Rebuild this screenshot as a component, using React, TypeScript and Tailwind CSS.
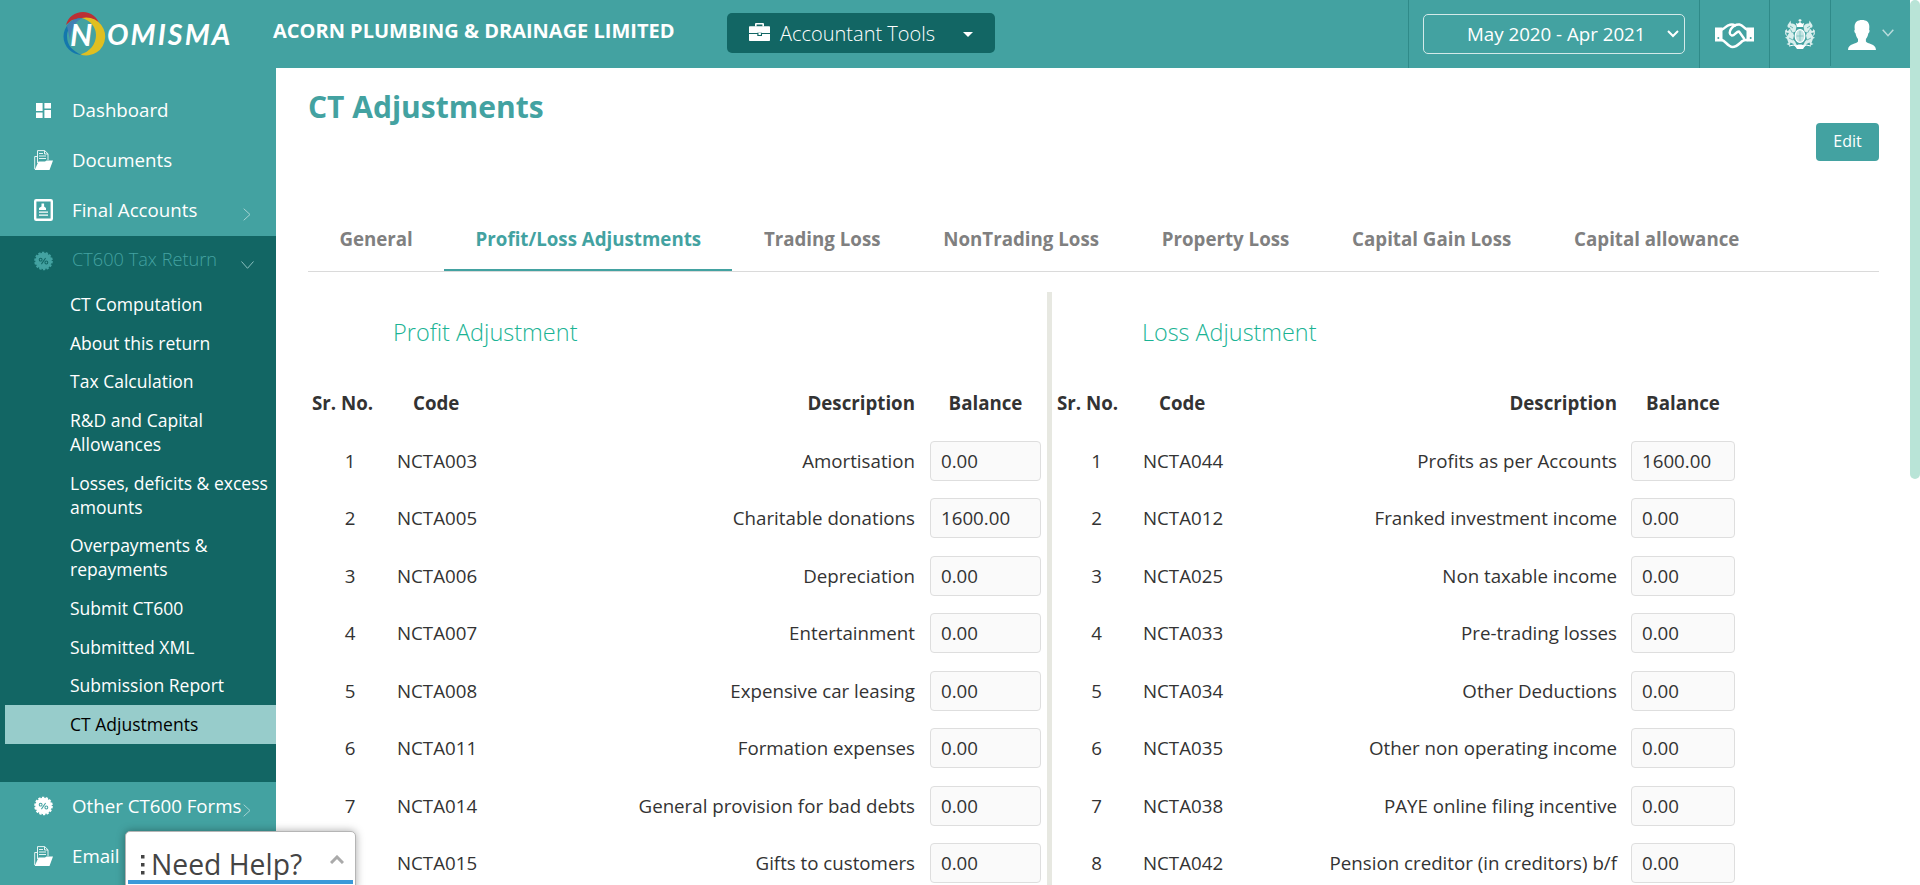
import React from "react";

type Row = [string, string, string];

const profitRows: Row[] = [
  ["NCTA003", "Amortisation", "0.00"],
  ["NCTA005", "Charitable donations", "1600.00"],
  ["NCTA006", "Depreciation", "0.00"],
  ["NCTA007", "Entertainment", "0.00"],
  ["NCTA008", "Expensive car leasing", "0.00"],
  ["NCTA011", "Formation expenses", "0.00"],
  ["NCTA014", "General provision for bad debts", "0.00"],
  ["NCTA015", "Gifts to customers", "0.00"],
];

const lossRows: Row[] = [
  ["NCTA044", "Profits as per Accounts", "1600.00"],
  ["NCTA012", "Franked investment income", "0.00"],
  ["NCTA025", "Non taxable income", "0.00"],
  ["NCTA033", "Pre-trading losses", "0.00"],
  ["NCTA034", "Other Deductions", "0.00"],
  ["NCTA035", "Other non operating income", "0.00"],
  ["NCTA038", "PAYE online filing incentive", "0.00"],
  ["NCTA042", "Pension creditor (in creditors) b/f", "0.00"],
];

const subItems = [
  "CT Computation",
  "About this return",
  "Tax Calculation",
  "R&D and Capital Allowances",
  "Losses, deficits & excess amounts",
  "Overpayments & repayments",
  "Submit CT600",
  "Submitted XML",
  "Submission Report",
  "CT Adjustments",
];

const tabs = [
  "General",
  "Profit/Loss Adjustments",
  "Trading Loss",
  "NonTrading Loss",
  "Property Loss",
  "Capital Gain Loss",
  "Capital allowance",
];

function Logo() {
  return (
    <div className="flex h-[68px] w-[273px] shrink-0 items-start pl-[60px]">
      <div className="relative mt-[11px] h-[45px] w-[47px] shrink-0">
        <svg viewBox="0 0 46 45" className="h-[45px] w-[46px]">
          <path d="M6 14C8 6 15 1 23 1s14 5 17 13L32 9 22 7 12 9Z" fill="#bb3034" />
          <path d="M20 43.500A19 19 0 1 0 22 7c9 3 14 9 14 17 0 9-6 17-16 19.500Z" fill="#e0bf20" />
          <path d="M22 7a18.500 18.500 0 1 0 0 37C12 40 7 34 7 25c0-8 7-15 15-18Z" fill="#1477ad" />
          <path d="M22 7c-6 0-12 3-15 8l3 14C11 18 15 11 22 7Z" fill="#4380b2" />
        </svg>
        <span className="absolute left-[10px] top-[6px] font-[Lato] text-[31px] font-bold italic leading-[34px] text-white">N</span>
      </div>
      <span className="mt-[18px] font-[Lato] text-[28.500px] font-bold italic leading-[32px] tracking-[2.100px] text-white">OMISMA</span>
    </div>
  );
}

function DashboardIcon() {
  return (
    <svg viewBox="0 0 15 15" className="h-[15px] w-[15px]" fill="#fff">
      <path d="M0 0h6.600v8H0zM0 9.500h6.600V15H0zM8.400 0H15v5.500H8.400zM8.400 7H15v8H8.400z" />
    </svg>
  );
}

function FolderIcon() {
  return (
    <svg viewBox="0 0 19 20" className="h-5 w-[19px]" fill="none">
      <path d="M.7 19V6.500H3M3.500 13V.6h7.200L14 3.800V10" stroke="#e6f4f3" strokeWidth="1" />
      <path d="M10.500.6V4H14" stroke="#e6f4f3" strokeWidth="1" />
      <path d="M5 3.500h4M5 6h7M5 8.500h7" stroke="#e6f4f3" strokeWidth="1" />
      <path d="M4.500 11.500H11l1.500-1H19L15.500 20H.7Z" fill="#fff" />
    </svg>
  );
}

function AccountsIcon() {
  return (
    <svg viewBox="0 0 19 22" className="h-[22px] w-[19px]" fill="none">
      <rect x="1.200" y="1.200" width="16.600" height="19.600" rx="1" stroke="#fff" strokeWidth="2.400" />
      <path d="M7.500 4.500h2.600v3L12 9v2H5V9l2.500-1.500zM5 12.500h9v1.300H5zM5 15.500h9v1.300H5z" fill="#fff" />
    </svg>
  );
}

function PercentBadge({ fill, mark }: { fill: string; mark: string }) {
  return (
    <svg viewBox="0 0 20 20" className="h-5 w-[19px]">
      <circle cx="10" cy="10" r="8.700" fill={fill} />
      <circle cx="10" cy="10" r="8.900" fill="none" stroke={fill} strokeWidth="1.800" strokeDasharray="2.500 1.500" />
      <g stroke={mark} strokeWidth="1.100" fill="none">
        <circle cx="7" cy="8.600" r="1.500" />
        <circle cx="13" cy="11.600" r="1.500" />
        <path d="M12.200 6.800 7.800 13.300" />
      </g>
    </svg>
  );
}

function ChevronRight() {
  return (
    <svg viewBox="0 0 8 13" className="h-[13px] w-2" fill="none" stroke="#a5d3d2" strokeWidth="1">
      <path d="M.7.7 7 6.500.7 12.300" />
    </svg>
  );
}

function SideItem({ icon, label, arrow }: { icon: React.ReactNode; label: string; arrow?: boolean }) {
  return (
    <div className="relative flex h-[50px] items-center pl-[34px] text-[18.720px] text-white">
      <span className="flex w-[19px] justify-center">{icon}</span>
      <span className="whitespace-nowrap pl-[19px]">{label}</span>
      {arrow && (
        <span className="absolute left-[243px] top-[23px]">
          <ChevronRight />
        </span>
      )}
    </div>
  );
}

function Handshake() {
  return (
    <svg viewBox="0 0 39 26" className="h-[26px] w-[39px]" fill="none" stroke="#fff" strokeLinejoin="round" strokeLinecap="round">
      <path d="M0 4.500h7.500v14H0zM31.500 4.500H39v14h-7.500z" fill="#fff" stroke="none" />
      <circle cx="3.300" cy="15" r="1" fill="#43a2a1" stroke="none" />
      <circle cx="35.700" cy="15" r="1" fill="#43a2a1" stroke="none" />
      <path d="M7 6.500c3-1 4-4 8-4.800 2-.4 4 0 5 .8" strokeWidth="2.400" />
      <path d="M32 6.500c-3-1-4-4.500-7.500-5-4-.4-6.500 1.600-8.500 4.500-2 3-1.500 6 .8 6.500 2.700.6 4.200-4 7.200-4l5 7" strokeWidth="2.400" />
      <path d="M7 17c3 .5 6 7 10.500 7 4 0 7-3.500 10-6 1.500-1 3-1.200 4.500-1" strokeWidth="2.600" />
    </svg>
  );
}

function Crest() {
  const half = (
    <g>
      <path d="M11.500 7.500C10 5 8.500 4 6 4.500L5.500 1.500 4 4C2.500 5.500 2 7 3 8.500l2.500.5L3 12l-2.500-1L1 13.500l3 .5-2.500 4-1.500.8 2 1 1.500 4.200-2 1 3 1.500 1-3 3 1.500 1.500 2.500 2-1-2-4-2-2 1-4-1-3 2.500-1Z" fill="#d9efed" />
      <path d="M1.500 16.500c-1.200-2-1-4 0-6M4 27l5-1 3 2" stroke="#fff" strokeWidth="1" fill="none" />
      <path d="M5.500 10.500 7.500 14M4 19l4 2M5 7l3 2" stroke="#43a2a1" strokeWidth=".7" />
    </g>
  );
  return (
    <svg viewBox="0 0 30 31" className="h-[31px] w-[30px]">
      {half}
      <g transform="matrix(-1 0 0 1 30 0)">{half}</g>
      <path d="M15 0v3M13.500 1.300h3" stroke="#fff" strokeWidth="1" />
      <path d="M10.800 4l1.200 4h6l1.200-4-2 .8L15 3l-2.200 1.800Z" fill="#fff" />
      <ellipse cx="15" cy="17" rx="4.800" ry="6.500" fill="#c4e5e3" stroke="#fff" strokeWidth="1.200" />
      <path d="M15 12v10M11.500 17h7" stroke="#7cc0be" strokeWidth=".8" />
      <path d="M10 27c2-2 8-2 10 0l-2 3h-6Z" fill="#fff" />
    </svg>
  );
}

function AdjustmentTable({ rows, cols, inputWidth, numClass }: { rows: Row[]; cols: string; inputWidth: string; numClass: string }) {
  return (
    <div>
      <div className={`grid h-[57.500px] items-center pb-[2px] font-bold ${cols}`}>
        <span className="whitespace-nowrap">Sr. No.</span>
        <span className="pl-[16px]">Code</span>
        <span className="whitespace-nowrap text-right">Description</span>
        <span className={`text-center ${inputWidth}`}>Balance</span>
      </div>
      {rows.map(([code, description, balance], i) => (
        <div key={code} className={`grid h-[57.500px] items-center ${cols}`}>
          <span className={`pb-px text-center ${numClass}`}>{i + 1}</span>
          <span className="pb-px">{code}</span>
          <span className="whitespace-nowrap pb-px text-right">{description}</span>
          <input
            readOnly
            value={balance}
            className={`-mt-px h-10 rounded border border-[#dedede] bg-[#fafafa] pb-px pl-[10px] text-[#333] outline-none ${inputWidth}`}
          />
        </div>
      ))}
    </div>
  );
}

export default function App() {
  return (
    <div className="relative flex h-[885px] w-[1920px] overflow-hidden bg-white font-['Open_Sans',sans-serif] text-[18.720px] text-[#333]">
      <div className="flex min-w-0 flex-1 flex-col">
        <header className="flex h-[68px] shrink-0 bg-[#43a2a1] text-white">
          <Logo />
          <span className="mt-[17px] w-[454px] shrink-0 whitespace-nowrap text-[20px] font-bold leading-7">ACORN PLUMBING &amp; DRAINAGE LIMITED</span>
          <button className="mt-[13px] flex h-10 w-[268px] shrink-0 items-center rounded-[5px] bg-[#126664] pl-[22px] text-[20px] font-light">
            <svg viewBox="0 0 21 18" className="mb-[2px] h-[18px] w-[21px]" fill="#fff">
              <path d="M6 3.500V1.200C6 .5 6.500 0 7.200 0h6.600c.7 0 1.200.5 1.200 1.200v2.300h-1.600V1.600H7.600v1.900Z" />
              <path d="M1 3.300h19c.6 0 1 .4 1 1V10h-8v-.3H8.300v.3H0V4.300c0-.6.4-1 1-1ZM0 11h8.300v2H13v-2h8v6c0 .6-.4 1-1 1H1c-.6 0-1-.4-1-1Z" />
              <path d="M9.500 10h2.400v2H9.500z" />
            </svg>
            <span className="w-[183px] whitespace-nowrap pt-[2px] pl-[10px] text-left">Accountant Tools</span>
            <svg viewBox="0 0 10 5" className="mt-[3px] ml-[10px] h-[5px] w-[10px]" fill="#fff">
              <path d="M0 0h10L5 5z" />
            </svg>
          </button>
          <div className="ml-auto flex h-[68px]">
            <div className="w-[291px] border-l border-[#2f8a89] pt-[14px] pl-[14px]">
              <div className="flex h-10 w-[262px] items-center rounded-[5px] border border-[#d4eae9] pl-[43px]">
                <span className="w-[200px] whitespace-nowrap">May 2020 - Apr 2021</span>
                <svg viewBox="0 0 12 8" className="h-2 w-3" fill="none" stroke="#fff" strokeWidth="2">
                  <path d="m1 1 5 5 5-5" />
                </svg>
              </div>
            </div>
            <div className="w-[70px] border-l border-[#2f8a89] pt-[23px] pl-[15px]">
              <Handshake />
            </div>
            <div className="w-[61px] border-l border-[#2f8a89] pt-[19px] pl-[15px]">
              <Crest />
            </div>
            <div className="flex h-[66px] w-[80px] border-l border-[#2f8a89] pt-5 pl-[17px]">
              <svg viewBox="0 0 28 30" className="h-[30px] w-7" fill="#fff">
                <path d="M14 0c4.500 0 7 2 7.300 6 .1 1.500 0 2.500-.2 3.500.8.500.6 3-.7 3.800-.6 3-1.400 4.700-2.500 5.700v2.500c1 2.500 10.100 2 10.100 8.500H0c0-6.500 9-6 10-8.500V19c-1.100-1-1.900-2.700-2.500-5.700-1.300-.8-1.500-3.300-.7-3.800-.2-1-.3-2-.2-3.500C7 2 9.500 0 14 0Z" />
              </svg>
              <svg viewBox="0 0 12 8" className="mt-[9px] ml-[6px] h-2 w-3" fill="none" stroke="#b9dcdc" strokeWidth="1.500">
                <path d="m.7.7 5.300 6 5.300-6" />
              </svg>
            </div>
          </div>
        </header>

        <div className="flex min-h-0 flex-1">
          <aside className="w-[276px] shrink-0 bg-[#43a2a1] pt-[17px]">
            <SideItem icon={<DashboardIcon />} label="Dashboard" />
            <SideItem icon={<FolderIcon />} label="Documents" />
            <SideItem icon={<AccountsIcon />} label="Final Accounts" arrow />
            <div className="mt-[1px] h-[546px] bg-[#126664]">
              <div className="flex h-[49px] items-center pl-[34px] text-[18.200px] font-light text-[#43a2a1]">
                <PercentBadge fill="#43a2a1" mark="#126664" />
                <span className="w-[169px] whitespace-nowrap pb-px pl-[19px]">CT600 Tax Return</span>
                <svg viewBox="0 0 13 8" className="mt-[8px] ml-[19px] h-2 w-[13px]" fill="none" stroke="#8abfbe" strokeWidth="1">
                  <path d="m.5.500 6 6.800 6-6.800" />
                </svg>
              </div>
              <ul className="text-[17.550px] leading-6 text-white">
                {subItems.map((item) => (
                  <li
                    key={item}
                    className={
                      item === "CT Adjustments"
                        ? "ml-[5px] bg-[#97cccb] pt-[7px] pb-[7.660px] pl-[65px] text-black"
                        : "pt-[7px] pb-[7.660px] pr-[5px] pl-[70px]"
                    }
                  >
                    {item}
                  </li>
                ))}
              </ul>
            </div>
            <div className="-mt-px">
              <SideItem icon={<PercentBadge fill="#fff" mark="#43a2a1" />} label="Other CT600 Forms" arrow />
              <SideItem icon={<FolderIcon />} label="Email" />
            </div>
          </aside>

          <main className="flex min-w-0 flex-1 flex-col pr-[31px] pl-8">
            <div className="flex h-[136px] shrink-0 justify-between">
              <h1 className="pt-[18px] text-[30px] font-bold leading-[42px] text-[#43a2a1]">CT Adjustments</h1>
              <button className="mt-[55px] flex h-[38px] w-[63px] items-center justify-center rounded bg-[#43a2a1] pb-[2px] text-[16px] text-white">Edit</button>
            </div>
            <nav className="flex h-[68px] shrink-0 border-b border-[#dadada] font-bold text-[#808080]">
              {tabs.map((tab, i) => (
                <span
                  key={tab}
                  className={
                    i === 1
                      ? "h-[67px] whitespace-nowrap border-b-2 border-[#43a2a1] px-[31.400px] pt-[21px] text-[#43a2a1]"
                      : "h-[67px] whitespace-nowrap px-[31.400px] pt-[21px]"
                  }
                >
                  {tab}
                </span>
              ))}
            </nav>
            <div className="mt-5 flex min-h-0 flex-1 overflow-hidden">
              <section className="w-[739px] shrink-0">
                <h2 className="h-[83px] pt-[23px] pl-[85px] text-[23.500px] font-light leading-[34px] text-[#1ab394]">Profit Adjustment</h2>
                <div className="pl-[4px]">
                  <AdjustmentTable rows={profitRows} cols="grid-cols-[85px_80px_438px_126px] [&>:nth-child(4)]:ml-[15px]" inputWidth="w-[111px]" numClass="w-[76px]" />
                </div>
              </section>
              <section className="min-w-0 flex-1 border-l-[5px] border-[#e7e8e1]">
                <h2 className="h-[83px] pt-[23px] pl-[90px] text-[23.400px] font-light leading-[34px] text-[#1ab394]">Loss Adjustment</h2>
                <div className="pl-[5px]">
                  <AdjustmentTable rows={lossRows} cols="grid-cols-[86px_80px_394px_118px] [&>:nth-child(4)]:ml-[14px]" inputWidth="w-[104px]" numClass="w-[79px]" />
                </div>
              </section>
            </div>
          </main>
        </div>
      </div>

      <div className="w-[10px] shrink-0 bg-white">
        <div className="h-[479px] rounded-[5px] bg-[#b9e4d7]" />
      </div>

      <div className="absolute top-[831px] left-[125px] flex h-[60px] w-[231px] flex-col rounded-t-[5px] border border-[#b5b5b5] bg-white px-[2px] shadow-[0_0_8px_rgba(0,0,0,0.35)]">
        <div className="flex h-[48px] items-center">
          <svg viewBox="0 0 4 20" className="mt-[17px] ml-[13px] h-5 w-1" fill="#444">
            <path d="M0 0h3.500v3.500H0zM0 8h3.500v3.500H0zM0 16h3.500v3.500H0z" />
          </svg>
          <span className="mt-[15px] w-[185px] whitespace-nowrap pl-[6px] text-[28.300px] leading-[36px] text-[#444]">Need Help?</span>
          <svg viewBox="0 0 14 9" className="mt-[7px] h-[9px] w-[14px]" fill="none" stroke="#aaa" strokeWidth="3">
            <path d="m1 8 6-6 6 6" />
          </svg>
        </div>
        <div className="h-1 shrink-0 bg-[#3a9ad9]" />
      </div>
    </div>
  );
}
